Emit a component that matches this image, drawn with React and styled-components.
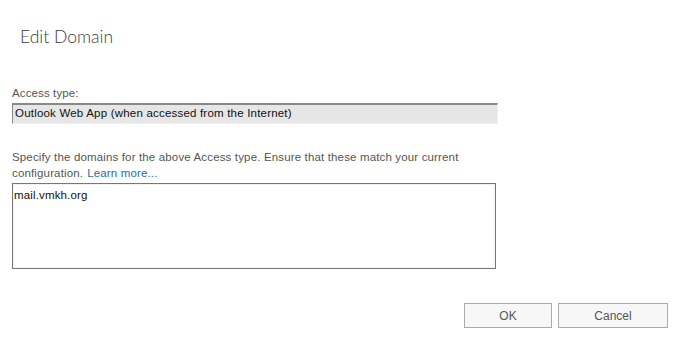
import React from "react";
import styled, { createGlobalStyle } from "styled-components";

const Global = createGlobalStyle`
  html, body { margin: 0; padding: 0; background: #fff; }
  body { font-family: "Liberation Sans", Arial, sans-serif; }
`;

const Page = styled.div`
  width: 700px;
  height: 360px;
  box-sizing: border-box;
  padding: 26px 32px 0 12px;
  display: flex;
  flex-direction: column;
`;

const Title = styled.h1`
  margin: 0 0 0 8px;
  font-family: Lato, "Open Sans", sans-serif;
  font-weight: 300;
  font-size: 17.5px;
  line-height: 22px;
  color: #3a3a3a;
`;

const Label = styled.div`
  margin-top: ${(p) => p.$top}px;
  font-size: 11.5px;
  line-height: 15px;
  letter-spacing: 0.12px;
  color: #555;
`;

const ReadOnlyBox = styled.div`
  margin-top: 2px;
  width: 486px;
  height: 21px;
  box-sizing: border-box;
  background: #e6e6e6;
  border-top: 2px solid #888;
  border-left: 1px solid #888;
  border-right: 1px solid #f0f0f0;
  border-bottom: 1px solid #f0f0f0;
  padding-left: 2px;
  font-size: 11.5px;
  line-height: 17px;
  letter-spacing: 0.2px;
  color: #111;
`;

const Description = styled.div`
  margin-top: 25px;
  display: flex;
  flex-direction: column;
  font-size: 11.5px;
  line-height: 16px;
  letter-spacing: 0.15px;
  color: #555;
`;

const DescLine = styled.div`
  display: flex;
  gap: 4px;
`;

const Link = styled.a`
  color: #1a6fa8;
  text-decoration: none;
`;

const TextArea = styled.div`
  margin-top: 2px;
  width: 484px;
  height: 86px;
  box-sizing: border-box;
  border: 1px solid #777;
  box-shadow: inset 1px 1px 0 #f2f2f2, inset -1px -1px 0 #f2f2f2;
  padding: 3px 1px;
  font-size: 11.5px;
  line-height: 17px;
  letter-spacing: 0.15px;
  color: #111;
`;

const ButtonRow = styled.div`
  margin-top: 34px;
  display: flex;
  justify-content: flex-end;
  gap: 6px;
`;

const Button = styled.button`
  width: ${(p) => p.$w}px;
  height: 25px;
  box-sizing: border-box;
  border: 1px solid #ababab;
  background: #f7f7f7;
  font-family: "Liberation Sans", Arial, sans-serif;
  font-size: 12px;
  color: #555;
  padding: 0;
`;

export default function App() {
  return (
    <>
      <Global />
      <Page>
        <Title>Edit Domain</Title>
        <Label $top={38}>Access type:</Label>
        <ReadOnlyBox>Outlook Web App (when accessed from the Internet)</ReadOnlyBox>
        <Description>
          <DescLine>
            Specify the domains for the above Access type. Ensure that these match your current
          </DescLine>
          <DescLine>
            <span>configuration.</span>
            <Link href="#">Learn more...</Link>
          </DescLine>
        </Description>
        <TextArea>mail.vmkh.org</TextArea>
        <ButtonRow>
          <Button $w={88}>OK</Button>
          <Button $w={110}>Cancel</Button>
        </ButtonRow>
      </Page>
    </>
  );
}
